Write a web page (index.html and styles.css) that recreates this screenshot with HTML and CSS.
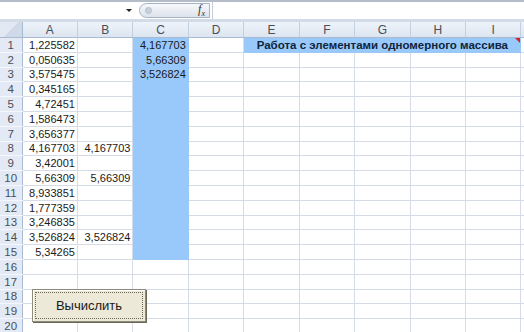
FILE: index.html
```html
<!DOCTYPE html>
<html lang="ru">
<head>
    <meta charset="UTF-8">
    <title>Работа с элементами одномерного массива</title>
    <link rel="stylesheet" href="styles.css">
</head>
<body>
    <div class="window">
        <!-- Formula bar -->
        <div class="toolbar">
            <div class="namebox"></div>
            <div class="drop"></div>
            <div class="fxbox">
                <span class="knob"></span>
                <span class="fx">f<sub>x</sub></span>
            </div>
            <div class="formula"></div>
        </div>

        <!-- Sheet -->
        <div class="sheet-wrap">
            <table class="sheet">
                <colgroup>
                    <col class="hdr-col">
                    <col><col><col><col><col><col><col><col><col>
                    <col>
                </colgroup>
                <thead>
                    <tr>
                        <th class="corner"></th>
                        <th>A</th><th>B</th><th>C</th><th>D</th><th>E</th>
                        <th>F</th><th>G</th><th>H</th><th>I</th><th></th>
                    </tr>
                </thead>
                <tbody>
                    <tr><th>1</th><td>1,225582</td><td></td><td class="fill">4,167703</td><td></td>
                        <td class="fill title" colspan="5">Работа с элементами одномерного массива<span class="note"></span></td><td></td></tr>
                    <tr><th>2</th><td>0,050635</td><td></td><td class="fill">5,66309</td><td></td><td></td><td></td><td></td><td></td><td></td><td></td></tr>
                    <tr><th>3</th><td>3,575475</td><td></td><td class="fill">3,526824</td><td></td><td></td><td></td><td></td><td></td><td></td><td></td></tr>
                    <tr><th>4</th><td>0,345165</td><td></td><td class="fill"></td><td></td><td></td><td></td><td></td><td></td><td></td><td></td></tr>
                    <tr><th>5</th><td>4,72451</td><td></td><td class="fill"></td><td></td><td></td><td></td><td></td><td></td><td></td><td></td></tr>
                    <tr><th>6</th><td>1,586473</td><td></td><td class="fill"></td><td></td><td></td><td></td><td></td><td></td><td></td><td></td></tr>
                    <tr><th>7</th><td>3,656377</td><td></td><td class="fill"></td><td></td><td></td><td></td><td></td><td></td><td></td><td></td></tr>
                    <tr><th>8</th><td>4,167703</td><td>4,167703</td><td class="fill"></td><td></td><td></td><td></td><td></td><td></td><td></td><td></td></tr>
                    <tr><th>9</th><td>3,42001</td><td></td><td class="fill"></td><td></td><td></td><td></td><td></td><td></td><td></td><td></td></tr>
                    <tr><th>10</th><td>5,66309</td><td>5,66309</td><td class="fill"></td><td></td><td></td><td></td><td></td><td></td><td></td><td></td></tr>
                    <tr><th>11</th><td>8,933851</td><td></td><td class="fill"></td><td></td><td></td><td></td><td></td><td></td><td></td><td></td></tr>
                    <tr><th>12</th><td>1,777359</td><td></td><td class="fill"></td><td></td><td></td><td></td><td></td><td></td><td></td><td></td></tr>
                    <tr><th>13</th><td>3,246835</td><td></td><td class="fill"></td><td></td><td></td><td></td><td></td><td></td><td></td><td></td></tr>
                    <tr><th>14</th><td>3,526824</td><td>3,526824</td><td class="fill"></td><td></td><td></td><td></td><td></td><td></td><td></td><td></td></tr>
                    <tr><th>15</th><td>5,34265</td><td></td><td class="fill"></td><td></td><td></td><td></td><td></td><td></td><td></td><td></td></tr>
                    <tr><th>16</th><td></td><td></td><td></td><td></td><td></td><td></td><td></td><td></td><td></td><td></td></tr>
                    <tr><th>17</th><td></td><td></td><td></td><td></td><td></td><td></td><td></td><td></td><td></td><td></td></tr>
                    <tr><th>18</th><td></td><td></td><td></td><td></td><td></td><td></td><td></td><td></td><td></td><td></td></tr>
                    <tr><th>19</th><td></td><td></td><td></td><td></td><td></td><td></td><td></td><td></td><td></td><td></td></tr>
                    <tr><th>20</th><td></td><td></td><td></td><td></td><td></td><td></td><td></td><td></td><td></td><td></td></tr>
                </tbody>
            </table>

            <!-- Form button floating over the cells -->
            <button class="calc"><span>Вычислить</span></button>
        </div>
    </div>
</body>
</html>
```

FILE: styles.css
```css
body {
    margin: 0;
    font-family: "Liberation Sans", Arial, sans-serif;
    background: #fff;
}

.window {
    width: 524px;
    height: 332px;
    overflow: hidden;
}

/* Formula bar */
.toolbar {
    display: flex;
    align-items: center;
    height: 17px;
    border-top: 2px solid #b3bcc8;
    border-bottom: 3px solid #d2dbe7;
    background: #fff;
}

.namebox {
    width: 126px;
}

.drop {
    width: 0;
    height: 0;
    border-left: 3px solid transparent;
    border-right: 3px solid transparent;
    border-top: 3px solid #222;
    margin-right: 7px;
}

.fxbox {
    display: flex;
    align-items: center;
    justify-content: space-between;
    width: 71px;
    height: 15px;
    box-sizing: border-box;
    padding: 0 4px 0 5px;
    border: 1px solid #a7b3c3;
    border-radius: 9px 0 0 9px;
    background: linear-gradient(#f6f8fb, #dde3eb);
}

.knob {
    width: 5px;
    height: 5px;
    border-radius: 50%;
    background: #c8d0db;
    border: 1px solid #b4bfcd;
}

.fx {
    font-family: "Liberation Serif", serif;
    font-style: italic;
    font-size: 12px;
    color: #333;
}

.fx sub {
    font-size: 8px;
}

.formula {
    flex: 1;
    height: 17px;
    margin-left: 2px;
    border-left: 1px solid #c5cfdc;
}

/* Sheet */
.sheet-wrap {
    position: relative;
}

.sheet {
    border-collapse: collapse;
    table-layout: fixed;
    width: 576.4px;
    font-size: 11px;
    line-height: 12px;
    color: #1a1a1a;
}

.sheet col {
    width: 55.44px;
}

.sheet col.hdr-col {
    width: 22px;
}

.sheet thead th {
    height: 15px;
    padding: 0;
    font-weight: normal;
    font-size: 12px;
    color: #4a4f57;
    background: linear-gradient(#eef3fa, #dbe4f0);
    border-right: 1px solid #c3d0df;
    border-bottom: 1px solid #a9bbd0;
}

.sheet thead th.corner {
    background: linear-gradient(135deg, #e2e9f3 50%, #cfd9e7 50%);
    border-right: 1px solid #a9bbd0;
}

.sheet tbody tr {
    height: 14.8px;
}

.sheet tbody th {
    padding: 0;
    font-weight: normal;
    font-size: 11.5px;
    color: #4a4f57;
    background: #e3eaf5;
    border-bottom: 1px solid #f4f7fb;
    border-right: 1px solid #a9bbd0;
}

.sheet td {
    padding: 0 2px 0 0;
    text-align: right;
    white-space: nowrap;
    border-right: 1px solid #d6dce7;
    border-bottom: 1px solid #d6dce7;
}

.sheet td.fill {
    background: #99c9fb;
    border-right-color: #99c9fb;
    border-bottom-color: #99c9fb;
}

.sheet td.title {
    position: relative;
    text-align: center;
    font-size: 11.5px;
    font-weight: bold;
    color: #10243a;
    padding-left: 2px;
}

.note {
    position: absolute;
    top: 0;
    right: 0;
    width: 0;
    height: 0;
    border-left: 5px solid transparent;
    border-top: 5px solid #e02020;
}

/* Form button */
.calc {
    position: absolute;
    left: 32px;
    top: 267px;
    width: 114px;
    height: 33px;
    padding: 2px;
    font-family: "Liberation Sans", Arial, sans-serif;
    font-size: 13px;
    color: #1a1a1a;
    background: #ece9d8;
    border: 1px solid #8f8b7c;
    box-shadow: inset 1px 1px 0 #fff, 1px 1px 0 #6b6858;
}

.calc span {
    display: flex;
    align-items: center;
    justify-content: center;
    height: 100%;
    border: 1px dotted #6b6858;
    box-sizing: border-box;
}
```
